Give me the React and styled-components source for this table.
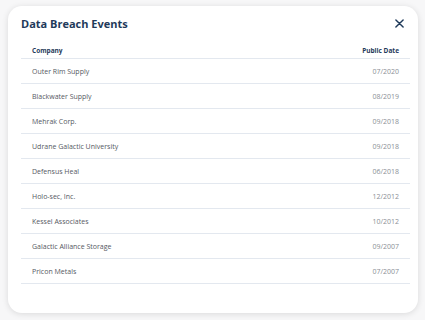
import React from 'react'
import styled, { createGlobalStyle } from 'styled-components'

const GlobalStyle = createGlobalStyle`
  body {
    margin: 0;
    background: #f7f7f8;
    font-family: "Open Sans", "Liberation Sans", sans-serif;
  }
`;

const events = [
  { company: 'Outer Rim Supply', date: '07/2020' },
  { company: 'Blackwater Supply', date: '08/2019' },
  { company: 'Mehrak Corp.', date: '09/2018' },
  { company: 'Udrane Galactic University', date: '09/2018' },
  { company: 'Defensus Heal', date: '06/2018' },
  { company: 'Holo-sec, Inc.', date: '12/2012' },
  { company: 'Kessel Associates', date: '10/2012' },
  { company: 'Galactic Alliance Storage', date: '09/2007' },
  { company: 'Pricon Metals', date: '07/2007' },
];

function App() {
  return (
    <Page>
      <GlobalStyle />
      <Card>
        <Header>
          <Title>Data Breach Events</Title>
          <Close aria-label="close">
            <svg width="9" height="9" viewBox="0 0 10 10">
              <path d="M1 1L9 9M9 1L1 9" stroke="#1f3a5a" strokeWidth="1.6" strokeLinecap="round" />
            </svg>
          </Close>
        </Header>
        <Table>
          <HeadRow>
            <HeadCell>Company</HeadCell>
            <HeadCell $right>Public Date</HeadCell>
          </HeadRow>
          {events.map((e) => (
            <Row key={e.company}>
              <Cell>{e.company}</Cell>
              <Cell $right $muted>{e.date}</Cell>
            </Row>
          ))}
        </Table>
      </Card>
    </Page>
  )
}
export default App;

const Page = styled.div`
  width: 425px;
  height: 320px;
  box-sizing: border-box;
  padding: 6px 7px 7px 8px;
`;

const Card = styled.div`
  width: 410px;
  height: 307px;
  box-sizing: border-box;
  background: #fff;
  border-radius: 14px;
  box-shadow: 0 1px 6px rgba(0, 0, 0, 0.12);
  padding: 10px 8px 0 13px;
`;

const Header = styled.div`
  display: flex;
  align-items: center;
  justify-content: space-between;
  height: 15px;
`;

const Title = styled.h2`
  margin: 0;
  font-size: 11px;
  font-weight: 700;
  color: #1f3a5a;
`;

const Close = styled.button`
  border: 0;
  background: none;
  padding: 0;
  margin-right: 6px;
  display: flex;
  cursor: pointer;
`;

const Table = styled.div`
  margin-top: 11px;
  display: flex;
  flex-direction: column;
`;

const HeadRow = styled.div`
  display: flex;
  justify-content: space-between;
  align-items: flex-end;
  box-sizing: border-box;
  height: 17px;
  padding: 0 11px 3px;
  border-bottom: 1px solid #e3e8ef;
`;

const HeadCell = styled.div`
  font-size: 6.5px;
  line-height: 9px;
  font-weight: 700;
  color: #1f3a5a;
  text-align: ${(p) => (p.$right ? 'right' : 'left')};
`;

const Row = styled.div`
  display: flex;
  justify-content: space-between;
  align-items: center;
  height: 24px;
  padding: 0 11px;
  border-bottom: 1px solid #e3e8ef;
`;

const Cell = styled.div`
  font-size: 7px;
  color: ${(p) => (p.$muted ? '#8a8f96' : '#55595f')};
  text-align: ${(p) => (p.$right ? 'right' : 'left')};
`;
